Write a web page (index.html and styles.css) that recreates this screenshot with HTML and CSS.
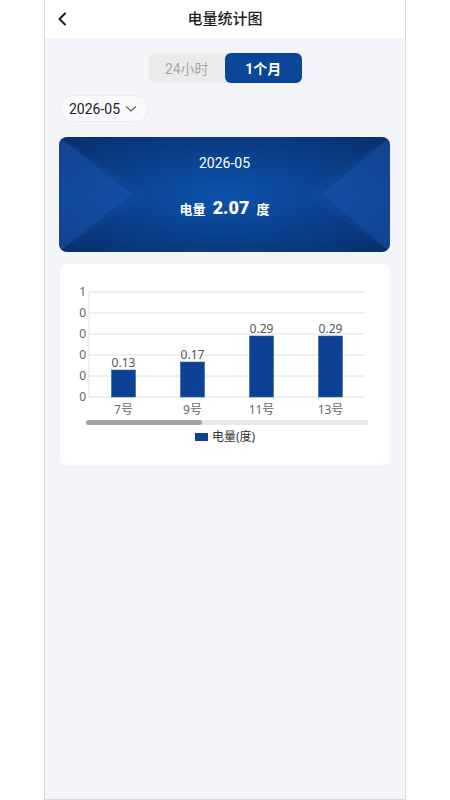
FILE: index.html
```html
<!DOCTYPE html>
<html lang="zh-CN">
<head>
    <meta charset="UTF-8">
    <meta name="viewport" content="width=device-width, initial-scale=1.0">
    <title>电量统计图</title>
    <link rel="stylesheet" href="styles.css">
</head>
<body>

<div class="phone">
    <div class="header">
        <div class="back">
            <svg width="10" height="14" viewBox="0 0 10 14"><path d="M8 1.5 L2.5 7 L8 12.5" fill="none" stroke="#1a1a1a" stroke-width="2" stroke-linecap="round" stroke-linejoin="round"/></svg>
        </div>
        <h1>电量统计图</h1>
        <div></div>
    </div>

    <div class="tabs">
        <div class="tab">24小时</div>
        <div class="tab active">1个月</div>
    </div>

    <div class="content">
        <div class="picker">
            <span>2026-05</span>
            <svg width="12" height="8" viewBox="0 0 12 8"><path d="M1 1.5 L6 6 L11 1.5" fill="none" stroke="#666" stroke-width="1.2"/></svg>
        </div>

        <div class="summary">
            <svg class="summary-bg" viewBox="0 0 331 115" preserveAspectRatio="none">
                <polygon points="0,0 73,57 0,115" fill="#2466c4" opacity="0.28"/>
                <polygon points="0,0 88,57 0,115" fill="#2466c4" opacity="0.12"/>
                <polygon points="331,0 263,57 331,115" fill="#2466c4" opacity="0.28"/>
                <polygon points="331,0 246,57 331,115" fill="#2466c4" opacity="0.12"/>
            </svg>
            <div class="summary-date">2026-05</div>
            <div class="summary-value">电量 <b>2.07</b> 度</div>
        </div>

        <div class="chart-card">
            <svg class="chart" width="330" height="201" viewBox="0 0 330 201">
                <g stroke="#e0e0e0" stroke-width="1">
                    <line x1="29" y1="28" x2="305" y2="28"/>
                    <line x1="29" y1="49" x2="305" y2="49"/>
                    <line x1="29" y1="70" x2="305" y2="70"/>
                    <line x1="29" y1="91" x2="305" y2="91"/>
                    <line x1="29" y1="112" x2="305" y2="112"/>
                    <line x1="29" y1="133" x2="305" y2="133"/>
                    <line x1="29" y1="28" x2="29" y2="133"/>
                </g>
                <g class="axis-label" text-anchor="end">
                    <text x="26" y="32">1</text>
                    <text x="26" y="53">0</text>
                    <text x="26" y="74">0</text>
                    <text x="26" y="95">0</text>
                    <text x="26" y="116">0</text>
                    <text x="26" y="137">0</text>
                </g>
                <g fill="#0c4196" stroke="#2a5fb0" stroke-width="0.6">
                    <rect x="51.5" y="106" width="24" height="27"/>
                    <rect x="120.5" y="98" width="24" height="35"/>
                    <rect x="189.5" y="72" width="24" height="61"/>
                    <rect x="258.5" y="72" width="24" height="61"/>
                </g>
                <g class="value-label" text-anchor="middle">
                    <text x="63.5" y="103">0.13</text>
                    <text x="132.5" y="95">0.17</text>
                    <text x="201.5" y="69">0.29</text>
                    <text x="270.5" y="69">0.29</text>
                </g>
                <g class="axis-label" text-anchor="middle">
                    <text x="63.5" y="150">7号</text>
                    <text x="132.5" y="150">9号</text>
                    <text x="201.5" y="150">11号</text>
                    <text x="270.5" y="150">13号</text>
                </g>
                <rect x="26" y="156" width="282" height="5" rx="2.5" fill="#e9e9ec"/>
                <rect x="26" y="156" width="116" height="5" rx="2.5" fill="#a3a3a6"/>
                <rect x="135" y="169" width="13" height="8" fill="#0c4196"/>
                <text class="legend" x="152" y="177">电量(度)</text>
            </svg>
        </div>
    </div>
</div>

</body>
</html>
```

FILE: styles.css
```css
body {
    margin: 0;
    padding: 0;
    background-color: #fff;
    font-family: Roboto, "Noto Sans CJK SC", sans-serif;
}
.phone {
    width: 360px;
    height: 799px;
    margin: 0 auto;
    background-color: #f4f5f9;
    border: 1px solid #d9dbe2;
    border-top: none;
    box-shadow: 0 0 2px rgba(0, 0, 0, 0.06);
}
.header {
    height: 38px;
    background-color: #fff;
    display: grid;
    grid-template-columns: 40px 1fr 40px;
    align-items: center;
}
.back {
    padding-left: 12px;
    display: flex;
    align-items: center;
}
.header h1 {
    margin: 0 0 3px;
    text-align: center;
    font-size: 15px;
    font-weight: 500;
    color: #222;
}
.tabs {
    width: 153px;
    height: 30px;
    margin: 15px auto 0;
    display: flex;
    background-color: #ebebeb;
    border-radius: 6px;
}
.tab {
    flex: 1;
    display: flex;
    align-items: center;
    justify-content: center;
    font-size: 14px;
    color: #a8a8a8;
    border-radius: 6px;
}
.tab.active {
    background-color: #0b4698;
    color: #fff;
    font-weight: bold;
}
.content {
    padding: 0 15px 0 14px;
}
.picker {
    margin-top: 12px;
    width: fit-content;
    height: 27px;
    box-sizing: border-box;
    padding: 0 11px 0 9px;
    display: flex;
    align-items: center;
    gap: 5px;
    white-space: nowrap;
    background-color: #f9f9fb;
    border: 1px solid #ececf1;
    border-radius: 14px;
    font-size: 14px;
    color: #222;
}
.summary {
    position: relative;
    margin-top: 15px;
    height: 115px;
    border-radius: 8px;
    overflow: hidden;
    background: radial-gradient(ellipse at 50% 50%, #0c53ad 0%, #0a438f 45%, #092e6d 100%);
    color: #fff;
    display: flex;
    flex-direction: column;
    align-items: center;
}
.summary-bg {
    position: absolute;
    left: 0;
    top: 0;
    width: 100%;
    height: 100%;
}
.summary-date {
    position: relative;
    margin-top: 18px;
    font-size: 14px;
}
.summary-value {
    position: relative;
    margin-top: 26px;
    font-size: 13px;
    font-weight: bold;
}
.summary-value b {
    font-size: 18px;
    margin: 0 4px;
}
.chart-card {
    margin-top: 12px;
    margin-left: 1px;
    height: 201px;
    background-color: #fff;
    border-radius: 6px;
}
.chart {
    display: block;
    font-family: "Noto Sans", "Noto Sans CJK SC", sans-serif;
}
.axis-label {
    font-size: 12px;
    fill: #666;
}
.value-label {
    font-size: 12px;
    fill: #555;
}
.legend {
    font-size: 12px;
    fill: #333;
}
```
